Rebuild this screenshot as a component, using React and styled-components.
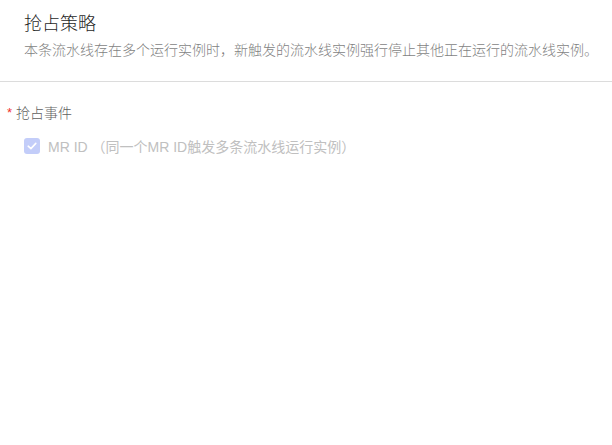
import React from "react";
import styled, { createGlobalStyle } from "styled-components";

const Global = createGlobalStyle`
  html, body { margin: 0; padding: 0; background: #fff; }
  body { font-family: "Liberation Sans", "Noto Sans CJK SC", sans-serif; }
`;

const Page = styled.div`
  width: 612px;
  min-height: 445px;
  background: #fff;
`;

const Header = styled.header`
  display: flex;
  flex-direction: column;
  gap: 3px;
  padding: 11px 24px 21px;
  border-bottom: 1px solid #dcdcdc;
`;

const Title = styled.h1`
  margin: 0;
  font-size: 18px;
  line-height: 26px;
  font-weight: 300;
  color: #1f1f1f;
`;

const Desc = styled.p`
  margin: 0;
  font-size: 14px;
  line-height: 20px;
  font-weight: 300;
  color: #7f7f7f;
  white-space: nowrap;
`;

const Form = styled.section`
  display: flex;
  flex-direction: column;
  gap: 12px;
  padding: 21px 0 0 7px;
`;

const Label = styled.div`
  display: flex;
  align-items: center;
  font-size: 14px;
  line-height: 20px;
  font-weight: 300;
  color: #5f5f5f;
`;

const Required = styled.span`
  color: #f0302c;
  width: 9px;
  font-size: 13px;
`;

const Option = styled.label`
  display: flex;
  align-items: center;
  gap: 8px;
  padding-left: 17px;
  height: 22px;
  font-size: 14px;
  color: #c0c0c0;
  cursor: not-allowed;
`;

const Box = styled.span`
  width: 16px;
  height: 16px;
  border-radius: 3px;
  background: #c3cdf9;
  display: flex;
  align-items: center;
  justify-content: center;
  flex: none;
`;

export default function App() {
  return (
    <Page>
      <Global />
      <Header>
        <Title>抢占策略</Title>
        <Desc>本条流水线存在多个运行实例时，新触发的流水线实例强行停止其他正在运行的流水线实例。</Desc>
      </Header>
      <Form>
        <Label>
          <Required>*</Required>
          抢占事件
        </Label>
        <Option>
          <Box>
            <svg width="10" height="8" viewBox="0 0 10 8">
              <path d="M1.2 4.2 L3.9 6.6 L8.8 1.4" fill="none" stroke="#fff" strokeWidth="1.6" strokeLinecap="round" strokeLinejoin="round" />
            </svg>
          </Box>
          MR ID （同一个MR ID触发多条流水线运行实例）
        </Option>
      </Form>
    </Page>
  );
}
